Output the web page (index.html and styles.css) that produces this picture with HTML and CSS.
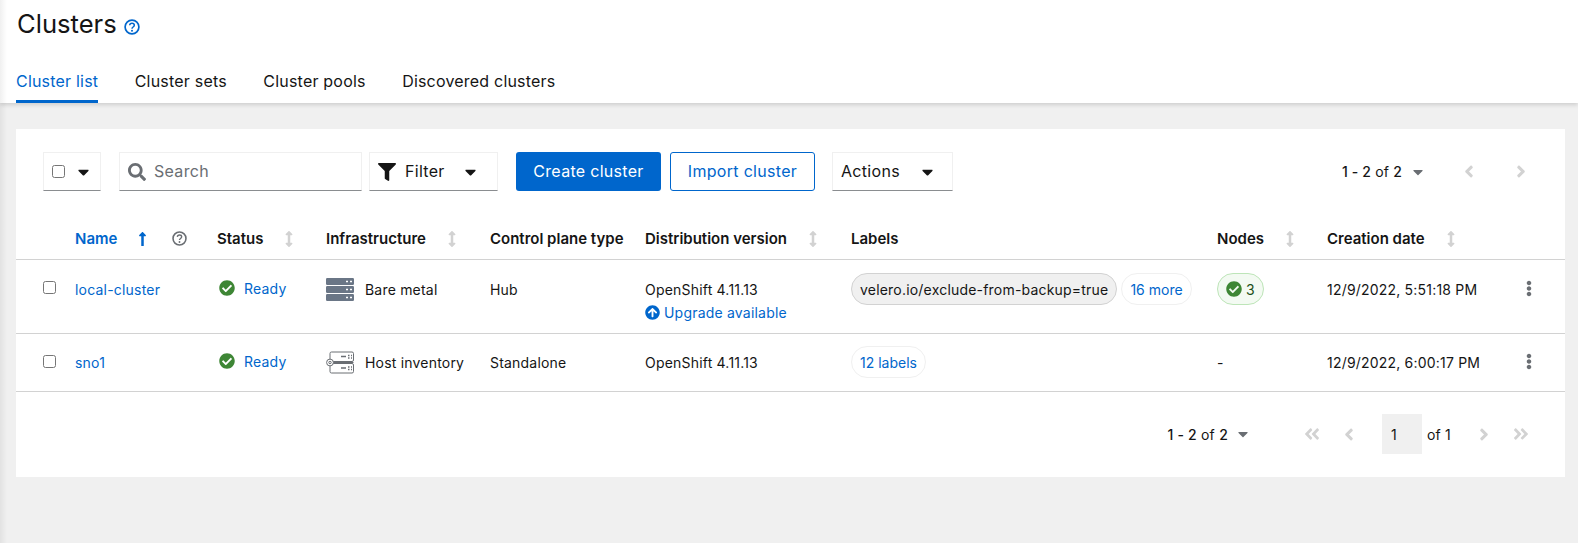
FILE: index.html
```html
<!DOCTYPE html>
<html lang="en">
<head>
    <meta charset="UTF-8" />
    <meta name="viewport" content="width=device-width, initial-scale=1.0" />
    <title>Clusters</title>
    <link rel="stylesheet" href="styles.css">
</head>
<body>
    <svg class="icon-defs" aria-hidden="true">
        <symbol id="i-search" viewBox="0 0 512 512"><path d="M505 442.7L405.3 343c-4.5-4.5-10.6-7-17-7H372c27.6-35.3 44-79.7 44-128C416 93.1 322.9 0 208 0S0 93.1 0 208s93.1 208 208 208c48.3 0 92.7-16.4 128-44v16.3c0 6.4 2.5 12.5 7 17l99.7 99.7c9.4 9.4 24.6 9.4 33.9 0l28.3-28.3c9.4-9.4 9.4-24.6.1-34zM208 336c-70.7 0-128-57.2-128-128 0-70.7 57.2-128 128-128 70.7 0 128 57.2 128 128 0 70.7-57.2 128-128 128z"/></symbol>
        <symbol id="i-filter" viewBox="0 0 512 512"><path d="M487.976 0H24.028C2.71 0-8.047 25.866 7.058 40.971L192 225.941V432c0 7.831 3.821 15.17 10.237 19.662l80 55.98C298.02 518.69 320 507.493 320 487.98V225.941l184.947-184.97C520.021 25.896 509.338 0 487.976 0z"/></symbol>
        <symbol id="i-caret" viewBox="0 0 320 512"><path d="M31.3 192h257.3c17.8 0 26.7 21.5 14.1 34.1L174.1 354.8c-7.8 7.8-20.5 7.8-28.3 0L17.2 226.1C4.6 213.5 13.5 192 31.3 192z"/></symbol>
        <symbol id="i-check" viewBox="0 0 512 512"><path d="M504 256c0 136.967-111.033 248-248 248S8 392.967 8 256 119.033 8 256 8s248 111.033 248 248zM227.314 387.314l184-184c6.248-6.248 6.248-16.379 0-22.627l-22.627-22.627c-6.248-6.249-16.379-6.249-22.628 0L216 308.118l-70.059-70.059c-6.248-6.248-16.379-6.248-22.628 0l-22.627 22.627c-6.248 6.248-6.248 16.379 0 22.627l104 104c6.249 6.249 16.379 6.249 22.628.001z"/></symbol>
        <symbol id="i-upgrade" viewBox="0 0 512 512"><path d="M8 256C8 119 119 8 256 8s248 111 248 248-111 248-248 248S8 393 8 256zm143.6 28.9l72.4-75.5V392c0 13.3 10.7 24 24 24h16c13.3 0 24-10.7 24-24V209.4l72.4 75.5c9.3 9.7 24.8 9.9 34.3.4l10.9-11c9.4-9.4 9.4-24.6 0-33.9L273 107.7c-9.4-9.4-24.6-9.4-33.9 0L106.3 240.4c-9.4 9.4-9.4 24.6 0 33.9l10.9 11c9.6 9.5 25.1 9.3 34.4-.4z"/></symbol>
        <symbol id="i-kebab" viewBox="0 0 192 512"><path d="M96 184c39.8 0 72 32.2 72 72s-32.2 72-72 72-72-32.2-72-72 32.2-72 72-72zM24 80c0 39.8 32.2 72 72 72s72-32.2 72-72S135.8 8 96 8 24 40.2 24 80zm0 352c0 39.8 32.2 72 72 72s72-32.2 72-72-32.2-72-72-72-72 32.2-72 72z"/></symbol>
        <symbol id="i-left" viewBox="0 0 256 512"><path d="M31.7 239l136-136c9.4-9.4 24.6-9.4 33.9 0l22.6 22.6c9.4 9.4 9.4 24.6 0 33.9L127.9 256l96.4 96.4c9.4 9.4 9.4 24.6 0 33.9L201.7 409c-9.4 9.4-24.6 9.4-33.9 0l-136-136c-9.5-9.4-9.5-24.6-.1-34z"/></symbol>
        <symbol id="i-right" viewBox="0 0 256 512"><path d="M224.3 273l-136 136c-9.4 9.4-24.6 9.4-33.9 0l-22.6-22.6c-9.4-9.4-9.4-24.6 0-33.9l96.4-96.4-96.4-96.4c-9.4-9.4-9.4-24.6 0-33.9L54.3 103c9.4-9.4 24.6-9.4 33.9 0l136 136c9.5 9.4 9.5 24.6.1 34z"/></symbol>
        <symbol id="i-first" viewBox="0 0 448 512"><path d="M223.7 239l136-136c9.4-9.4 24.6-9.4 33.9 0l22.6 22.6c9.4 9.4 9.4 24.6 0 33.9L319.9 256l96.4 96.4c9.4 9.4 9.4 24.6 0 33.9L393.7 409c-9.4 9.4-24.6 9.4-33.9 0l-136-136c-9.5-9.4-9.5-24.6-.1-34zm-192 34l136 136c9.4 9.4 24.6 9.4 33.9 0l22.6-22.6c9.4-9.4 9.4-24.6 0-33.9L127.9 256l96.4-96.4c9.4-9.4 9.4-24.6 0-33.9L201.7 103c-9.4-9.4-24.6-9.4-33.9 0l-136 136c-9.5 9.4-9.5 24.6-.1 34z"/></symbol>
        <symbol id="i-last" viewBox="0 0 448 512"><path d="M224.3 273l-136 136c-9.4 9.4-24.6 9.4-33.9 0l-22.6-22.6c-9.4-9.4-9.4-24.6 0-33.9l96.4-96.4-96.4-96.4c-9.4-9.4-9.4-24.6 0-33.9L54.3 103c9.4-9.4 24.6-9.4 33.9 0l136 136c9.5 9.4 9.5 24.6.1 34zm192-34l-136-136c-9.4-9.4-24.6-9.4-33.9 0l-22.6 22.6c-9.4 9.4-9.4 24.6 0 33.9l96.4 96.4-96.4 96.4c-9.4 9.4-9.4 24.6 0 33.9l22.6 22.6c9.4 9.4 24.6 9.4 33.9 0l136-136c9.4-9.2 9.4-24.4 0-33.8z"/></symbol>
        <symbol id="i-up" viewBox="0 0 256 512"><path d="M88 166.059V468c0 6.627 5.373 12 12 12h56c6.627 0 12-5.373 12-12V166.059h46.059c21.382 0 32.09-25.851 16.971-40.971l-86.059-86.059c-9.373-9.373-24.569-9.373-33.941 0l-86.059 86.059c-15.119 15.119-4.411 40.971 16.971 40.971H88z"/></symbol>
        <symbol id="i-sort" viewBox="0 0 256 512"><path d="M214.059 377.941H168V134.059h46.059c21.382 0 32.09-25.851 16.971-40.971L144.971 7.029c-9.373-9.373-24.569-9.373-33.941 0L24.971 93.088c-15.119 15.119-4.411 40.971 16.971 40.971H88v243.882H41.941c-21.382 0-32.09 25.851-16.971 40.971l86.059 86.059c9.373 9.373 24.569 9.373 33.941 0l86.059-86.059c15.12-15.119 4.412-40.971-16.97-40.971z"/></symbol>
        <symbol id="i-help" viewBox="0 0 16 16"><circle cx="8" cy="8" r="6.9" fill="none" stroke="currentColor" stroke-width="1.7"/><path d="M5.7 6.3C5.8 5 6.8 4.3 8 4.3c1.3 0 2.3.8 2.3 1.9 0 1.9-2.3 1.7-2.3 3.5" fill="none" stroke="currentColor" stroke-width="1.5"/><circle cx="8" cy="11.7" r="1"/></symbol>
    </svg>

    <header class="page-header">
        <div class="title-row">
            <h1>Clusters</h1>
            <svg class="icon help-icon"><use href="#i-help"/></svg>
        </div>
        <nav class="tabs">
            <a class="tab active">Cluster list</a>
            <a class="tab">Cluster sets</a>
            <a class="tab">Cluster pools</a>
            <a class="tab">Discovered clusters</a>
        </nav>
    </header>

    <main class="content">
        <section class="card">
            <div class="toolbar">
                <div class="select select-check">
                    <input type="checkbox">
                    <svg class="icon caret"><use href="#i-caret"/></svg>
                </div>
                <div class="select search">
                    <svg class="icon search-icon"><use href="#i-search"/></svg>
                    <span class="placeholder">Search</span>
                </div>
                <div class="select filter">
                    <svg class="icon filter-icon"><use href="#i-filter"/></svg>
                    <span>Filter</span>
                    <svg class="icon caret push"><use href="#i-caret"/></svg>
                </div>
                <button class="btn btn-primary" type="button">Create cluster</button>
                <button class="btn btn-secondary" type="button">Import cluster</button>
                <div class="select actions">
                    <span>Actions</span>
                    <svg class="icon caret push"><use href="#i-caret"/></svg>
                </div>
                <div class="pager-top">
                    <span class="range"><b>1 - 2</b> of <b>2</b></span>
                    <svg class="icon caret caret-grey"><use href="#i-caret"/></svg>
                    <svg class="icon chevron chevron-prev"><use href="#i-left"/></svg>
                    <svg class="icon chevron chevron-next"><use href="#i-right"/></svg>
                </div>
            </div>

            <table class="clusters">
                <colgroup>
                    <col class="c-select"><col class="c-name"><col class="c-status"><col class="c-infra"><col class="c-plane">
                    <col class="c-dist"><col class="c-labels"><col class="c-nodes"><col class="c-date"><col class="c-menu">
                </colgroup>
                <thead>
                    <tr>
                        <th></th>
                        <th><div class="th-in sorted">Name
                            <svg class="icon up-icon"><use href="#i-up"/></svg>
                            <svg class="icon th-help"><use href="#i-help"/></svg>
                        </div></th>
                        <th><div class="th-in">Status <svg class="icon sort-icon"><use href="#i-sort"/></svg></div></th>
                        <th><div class="th-in">Infrastructure <svg class="icon sort-icon"><use href="#i-sort"/></svg></div></th>
                        <th><div class="th-in">Control plane type</div></th>
                        <th><div class="th-in">Distribution version <svg class="icon sort-icon"><use href="#i-sort"/></svg></div></th>
                        <th><div class="th-in">Labels</div></th>
                        <th><div class="th-in">Nodes <svg class="icon sort-icon"><use href="#i-sort"/></svg></div></th>
                        <th><div class="th-in">Creation date <svg class="icon sort-icon"><use href="#i-sort"/></svg></div></th>
                        <th></th>
                    </tr>
                </thead>
                <tbody>
                    <tr class="row-tall">
                        <td><input class="row-check" type="checkbox"></td>
                        <td><div class="line"><a class="link">local-cluster</a></div></td>
                        <td><div class="line status"><svg class="icon ok-icon"><use href="#i-check"/></svg><a class="link">Ready</a></div></td>
                        <td><div class="line infra">
                            <svg class="infra-icon" viewBox="0 0 28 23">
                                <rect y="0" width="28" height="7" rx="1.2" fill="#6a7686"/>
                                <rect y="8" width="28" height="7" rx="1.2" fill="#6a7686"/>
                                <rect y="16" width="28" height="7" rx="1.2" fill="#6a7686"/>
                                <path d="M20 3.5h2M24 3.5h2M20 11.5h2M24 11.5h2M20 19.5h2M24 19.5h2" stroke="#fff" stroke-width="1.6"/>
                            </svg>
                            Bare metal</div></td>
                        <td><div class="line">Hub</div></td>
                        <td>
                            <div class="line">OpenShift 4.11.13</div>
                            <a class="link upgrade"><svg class="icon upgrade-icon"><use href="#i-upgrade"/></svg>Upgrade available</a>
                        </td>
                        <td><div class="line labels">
                            <span class="pill pill-grey">velero.io/exclude-from-backup=true</span>
                            <span class="pill pill-link">16 more</span>
                        </div></td>
                        <td><div class="line"><span class="pill pill-green"><svg class="icon pill-check"><use href="#i-check"/></svg>3</span></div></td>
                        <td><div class="line">12/9/2022, 5:51:18 PM</div></td>
                        <td><div class="line"><svg class="icon kebab"><use href="#i-kebab"/></svg></div></td>
                    </tr>
                    <tr class="row-short">
                        <td><input class="row-check" type="checkbox"></td>
                        <td><div class="line"><a class="link">sno1</a></div></td>
                        <td><div class="line status"><svg class="icon ok-icon"><use href="#i-check"/></svg><a class="link">Ready</a></div></td>
                        <td><div class="line infra">
                            <svg class="infra-icon" viewBox="0 0 28 23" fill="none" stroke="#6a6e73">
                                <rect x="4" y="1" width="23.5" height="9.5" rx="1.5"/>
                                <rect x="4" y="12.5" width="23.5" height="9.5" rx="1.5"/>
                                <circle cx="4" cy="11.5" r="3.4" fill="#fff"/>
                                <circle cx="4" cy="11.5" r="1.2"/>
                                <path d="M7.4 11.5H27.5" />
                                <path d="M15 5.5h5M15 17h5M22 4.5h1.5M25 4.5h1M22 7h1.5M25 7h1M22 16h1.5M25 16h1M22 18.5h1.5M25 18.5h1" stroke-width="1.4"/>
                            </svg>
                            Host inventory</div></td>
                        <td><div class="line">Standalone</div></td>
                        <td><div class="line">OpenShift 4.11.13</div></td>
                        <td><div class="line labels"><span class="pill pill-link">12 labels</span></div></td>
                        <td><div class="line">-</div></td>
                        <td><div class="line">12/9/2022, 6:00:17 PM</div></td>
                        <td><div class="line"><svg class="icon kebab"><use href="#i-kebab"/></svg></div></td>
                    </tr>
                </tbody>
            </table>

            <div class="pager-bottom">
                <span class="range"><b>1 - 2</b> of <b>2</b></span>
                <svg class="icon caret caret-grey"><use href="#i-caret"/></svg>
                <svg class="icon double first"><use href="#i-first"/></svg>
                <svg class="icon chevron back"><use href="#i-left"/></svg>
                <div class="page-box">1</div>
                <span class="of">of 1</span>
                <svg class="icon chevron forward"><use href="#i-right"/></svg>
                <svg class="icon double last"><use href="#i-last"/></svg>
            </div>
        </section>
    </main>
</body>
</html>
```

FILE: styles.css
```css
* {
    box-sizing: border-box;
}
html, body {
    height: 100%;
}
body {
    margin: 0;
    background: #f0f0f0;
    color: #151515;
    font-family: Inter, "Liberation Sans", sans-serif;
    font-size: 14px;
    letter-spacing: 0.2px;
    overflow: hidden;
}
/* sidebar shadow falling over the left edge of the page */
body::before {
    content: "";
    position: absolute;
    top: 0;
    bottom: 0;
    left: 0;
    width: 7px;
    z-index: 2;
    background: linear-gradient(to right, rgba(3, 3, 3, 0.06), rgba(3, 3, 3, 0));
}
.icon-defs {
    display: none;
}
.icon {
    fill: currentColor;
    flex: none;
}
a {
    text-decoration: none;
}

/* header */
.page-header {
    height: 103px;
    background: #fff;
    box-shadow: 0 2px 4px rgba(3, 3, 3, 0.14);
    padding: 0 0 0 16px;
    position: relative;
}
.title-row {
    display: flex;
    align-items: center;
    height: 46px;
    padding-left: 1px;
}
h1 {
    margin: 0;
    font-size: 25.6px;
    font-weight: 400;
    letter-spacing: 0;
}
.help-icon {
    width: 16px;
    height: 16px;
    margin: 7px 0 0 7px;
    color: #06c;
}
.tabs {
    display: flex;
    gap: 36.5px;
    height: 57px;
}
.tab {
    display: flex;
    align-items: center;
    font-size: 16px;
    letter-spacing: 0.2px;
    padding-top: 12px;
    color: #151515;
}
.tab.active {
    color: #06c;
    box-shadow: inset 0 -3px 0 #06c;
}

/* card */
.content {
    padding: 26px 13px 0 16px;
}
.card {
    background: #fff;
    height: 348px;
}

/* toolbar */
.toolbar {
    display: flex;
    align-items: center;
    padding: 23px 39px 0 27px;
    height: 62px;
    margin-bottom: 25px;
    font-size: 16px;
    letter-spacing: 0.3px;
}
.select {
    display: flex;
    align-items: center;
    height: 39px;
    border: 1px solid #f0f0f0;
    border-bottom: 1px solid #8a8d90;
}
.select span {
    margin-top: -2px;
}
.caret {
    width: 11px;
    height: 18px;
    color: #151515;
}
.caret-grey {
    width: 10px;
    height: 16px;
    color: #6a6e73;
}
.push {
    margin-left: auto;
}
.select-check {
    width: 58px;
    padding-left: 8px;
}
.select-check input,
.row-check {
    margin: 0;
    width: 13px;
    height: 13px;
}
.select-check .caret {
    margin-left: 13px;
}
.search {
    width: 243px;
    margin-left: 18px;
    padding-left: 8px;
}
.search-icon {
    width: 18px;
    height: 18px;
    color: #6a6e73;
    margin-right: 8px;
}
.placeholder {
    color: #6a6e73;
}
.filter {
    width: 129px;
    margin-left: 7px;
    padding: 0 21px 0 8px;
}
.filter-icon {
    width: 18px;
    height: 18px;
    margin-right: 9px;
}
.btn {
    height: 39px;
    width: 145px;
    border-radius: 3px;
    font: inherit;
    letter-spacing: inherit;
    padding: 0 0 2px;
}
.btn-primary {
    margin-left: 18px;
    background: #06c;
    border: 0;
    color: #fff;
}
.btn-secondary {
    margin-left: 9px;
    background: #fff;
    border: 1px solid #06c;
    color: #06c;
}
.actions {
    width: 121px;
    margin-left: 17px;
    padding: 0 19px 0 8px;
}
.pager-top {
    margin-left: auto;
    display: flex;
    align-items: center;
    font-size: 14px;
    letter-spacing: 0.15px;
}
.range b {
    font-weight: 500;
}
.pager-top .caret-grey {
    margin-left: 11px;
}
.chevron {
    width: 10px;
    height: 19px;
    color: #d2d2d2;
}
.chevron-prev {
    margin-left: 41px;
}
.chevron-next {
    margin-left: 42px;
}

/* table */
.clusters {
    width: 100%;
    table-layout: fixed;
    border-collapse: separate;
    border-spacing: 0;
}
.c-select { width: 59px; }
.c-name { width: 142px; }
.c-status { width: 109px; }
.c-infra { width: 164px; }
.c-plane { width: 155px; }
.c-dist { width: 206px; }
.c-labels { width: 366px; }
.c-nodes { width: 110px; }
.c-date { width: 190px; }
.c-menu { width: 48px; }

th {
    height: 44px;
    padding: 2px 0 0;
    text-align: left;
    font-size: 15px;
    letter-spacing: 0;
    font-weight: 600;
    border-bottom: 1px solid #d2d2d2;
}
th:first-child,
td:first-child {
    padding-left: 27px;
}
.th-in {
    display: flex;
    align-items: center;
    white-space: nowrap;
}
.sorted {
    color: #06c;
}
.sort-icon {
    width: 8px;
    height: 16px;
    margin-left: 22px;
    color: #d2d2d2;
}
.up-icon {
    width: 9px;
    height: 16px;
    margin-left: 21px;
}
.th-help {
    width: 15px;
    height: 15px;
    margin-left: 25px;
    color: #6a6e73;
}
td {
    height: 58px;
    padding: 13px 0 0;
    vertical-align: top;
    border-bottom: 1px solid #d2d2d2;
}
.row-tall td {
    height: 74px;
}
.row-short td {
    padding-top: 12px;
}
.row-check {
    display: block;
    margin-top: 8px;
}
.row-short .row-check {
    margin-top: 9px;
}
.line {
    display: flex;
    align-items: center;
    min-height: 32px;
    white-space: nowrap;
}
.link {
    color: #06c;
}
.status .link {
    margin-top: -2px;
}
.ok-icon {
    width: 16px;
    height: 16px;
    margin: -2px 9px 0 2px;
    color: #3e8635;
}
.infra-icon {
    width: 28px;
    height: 23px;
    margin-right: 11px;
    flex: none;
}
.upgrade {
    display: flex;
    align-items: center;
    margin-top: -1px;
}
.upgrade-icon {
    width: 15px;
    height: 15px;
    margin-right: 4px;
    color: #06c;
}
.labels {
    gap: 4px;
}
.pill {
    display: inline-flex;
    align-items: center;
    height: 32px;
    padding: 0 8px;
    border-radius: 16px;
    border: 1px solid #f0f0f0;
    white-space: nowrap;
}
.pill-grey {
    background: #f0f0f0;
    border-color: #d2d2d2;
}
.pill-link {
    color: #06c;
    background: #fff;
    letter-spacing: 0;
}
.pill-green {
    background: #f3faf2;
    border-color: #bde5b8;
    color: #1e4f18;
}
.pill-check {
    width: 16px;
    height: 16px;
    margin-right: 4px;
    color: #3e8635;
}
.kebab {
    width: 6px;
    height: 17px;
    margin: -2px 0 0 9px;
    color: #6a6e73;
}

/* bottom pagination */
.pager-bottom {
    display: flex;
    align-items: center;
    justify-content: flex-end;
    padding: 22px 35px 0 0;
}
.pager-bottom .caret-grey {
    margin-left: 10px;
}
.double {
    width: 18px;
    height: 18px;
    color: #d2d2d2;
}
.first {
    margin-left: 55px;
}
.back {
    margin-left: 23px;
}
.page-box {
    width: 40px;
    height: 40px;
    margin-left: 28px;
    padding-left: 9px;
    background: #f0f0f0;
    display: flex;
    align-items: center;
}
.of {
    margin-left: 5px;
}
.forward {
    margin-left: 28px;
}
.last {
    margin-left: 23px;
}
```
